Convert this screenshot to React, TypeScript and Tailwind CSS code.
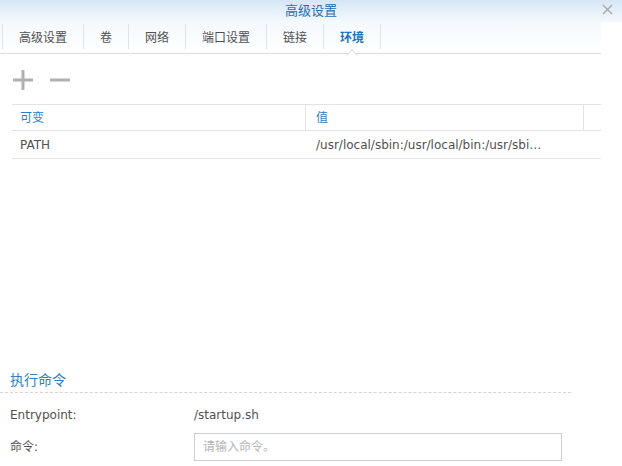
import React from "react";

const tabs = ["高级设置", "卷", "网络", "端口设置", "链接", "环境"];
const activeTab = "环境";

const font = "font-['DejaVu_Sans','Noto_Sans_CJK_SC',sans-serif]";

const PlusIcon = () => (
  <svg width="20" height="20" viewBox="0 0 20 20">
    <rect x="0" y="8.5" width="20" height="3" fill="#b0b0b0" />
    <rect x="8.5" y="0" width="3" height="20" fill="#b0b0b0" />
  </svg>
);

const MinusIcon = () => (
  <svg width="20" height="20" viewBox="0 0 20 20">
    <rect x="0" y="8.5" width="20" height="3" fill="#b0b0b0" />
  </svg>
);

export default function App() {
  return (
    <div className={`relative flex h-[466px] w-[622px] flex-col overflow-hidden bg-white text-[12px] text-[#505050] ${font}`}>
      {/* title bar */}
      <div className="relative flex h-[22px] items-center justify-center bg-gradient-to-b from-[#d6e6f6] to-[#f4f9fd] text-[13px] text-[#1d6fb8]">
        高级设置
        <svg className="absolute right-[9px] top-[4px]" width="11" height="11" viewBox="0 0 11 11">
          <path d="M1 1 L10 10 M10 1 L1 10" stroke="#a8a8a8" strokeWidth="1.4" />
        </svg>
      </div>

      {/* tabs */}
      <div className="mr-[21px] flex h-[32px] items-start border-b border-[#dedede] bg-gradient-to-b from-[#f4f9fd] to-white pl-[2px] pt-[2px]">
        {tabs.map((t, i) => (
          <div
            key={t}
            className={`relative flex h-[25px] items-center border-l border-[#e3e3e3] px-4 pt-[2px] ${
              i === tabs.length - 1 ? "border-r" : ""
            } ${t === activeTab ? "font-bold text-[#1e73be]" : ""}`}
          >
            {t}
            {t === activeTab && (
              <span className="absolute left-1/2 top-[27px] h-[8px] w-[8px] -translate-x-1/2 rotate-45 border-l border-t border-[#dedede] bg-white" />
            )}
          </div>
        ))}
      </div>

      {/* toolbar */}
      <div className="flex h-[50px] items-center gap-[17px] pl-[13px] pt-[1px]">
        <PlusIcon />
        <MinusIcon />
      </div>

      {/* table */}
      <div className="ml-[12px] w-[589px]">
        <div className="flex h-[27px] items-center border-y border-[#e3e3e3] text-[#2f7fc4]">
          <div className="flex h-full w-[294px] items-center border-r border-[#e3e3e3] pl-2">可变</div>
          <div className="flex h-full w-[278px] items-center border-r border-[#e3e3e3] pl-[10px]">值</div>
          <div className="flex-1" />
        </div>
        <div className="flex h-[28px] items-center border-b border-[#e3e3e3]">
          <div className="w-[294px] pl-2">PATH</div>
          <div className="whitespace-nowrap pl-[10px]">/usr/local/sbin:/usr/local/bin:/usr/sbi…</div>
        </div>
      </div>

      {/* run command */}
      <div className="mt-auto pb-[5px]">
        <div className="flex h-[24px] w-[571px] items-center border-b border-dashed border-[#d4d4d4] pl-[10px] text-[14px] text-[#2f7fc4]">
          执行命令
        </div>
        <div className="mt-[12px] flex h-[20px] items-center">
          <div className="w-[194px] pl-[10px]">Entrypoint:</div>
          <div>/startup.sh</div>
        </div>
        <div className="mt-[8px] flex h-[28px] items-center">
          <div className="w-[194px] pl-[10px]">命令:</div>
          <input
            className={`h-[28px] w-[368px] border border-[#cfcfcf] px-2 text-[12px] outline-none placeholder:text-[#b5b5b5] ${font}`}
            placeholder="请输入命令。"
          />
        </div>
      </div>
    </div>
  );
}
